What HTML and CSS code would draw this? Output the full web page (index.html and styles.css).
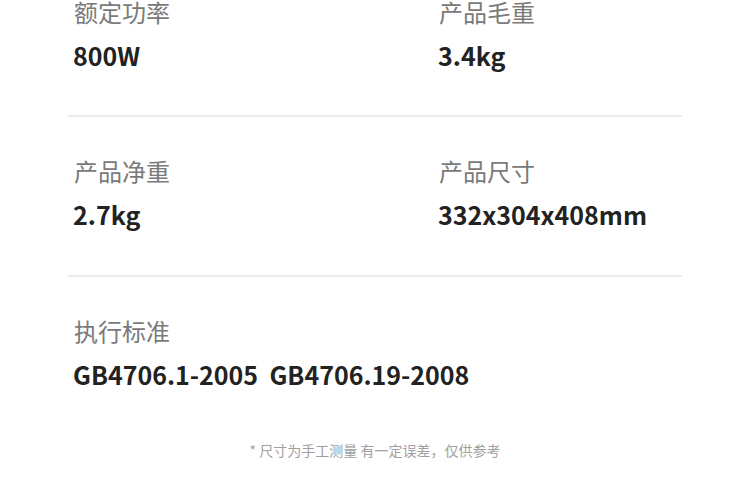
FILE: index.html
```html
<!DOCTYPE html>
<html lang="zh-CN">
<head>
<meta charset="utf-8">
<link rel="stylesheet" href="styles.css">
</head>
<body>
<div class="specs">
  <div class="row first">
    <div class="cell"><div class="label">额定功率</div><div class="value">800W</div></div>
    <div class="cell"><div class="label">产品毛重</div><div class="value">3.4kg</div></div>
  </div>
  <div class="row">
    <div class="cell"><div class="label">产品净重</div><div class="value">2.7kg</div></div>
    <div class="cell"><div class="label">产品尺寸</div><div class="value">332x304x408mm</div></div>
  </div>
  <div class="row last">
    <div class="cell wide"><div class="label">执行标准</div><div class="value">GB4706.1-2005&nbsp;&nbsp;GB4706.19-2008</div></div>
  </div>
  <p class="note">* 尺寸为手工测量 有一定误差，仅供参考</p>
</div>
</body>
</html>
```
FILE: styles.css
```css
html, body {
  margin: 0;
  padding: 0;
  background: #ffffff;
}
body {
  font-family: "Noto Sans CJK SC", "Noto Sans", sans-serif;
  width: 750px;
  height: 486px;
  overflow: hidden;
}
.specs {
  margin: -5px 68px 0 68px;
}
.row {
  display: grid;
  grid-template-columns: 365px 1fr;
  padding: 37px 0 43px 6px;
  border-bottom: 2px solid #ebebeb;
}
.row.first {
  padding-top: 0;
  padding-bottom: 42px;
}
.row.last {
  border-bottom: none;
  grid-template-columns: 1fr;
  padding-bottom: 0;
}
.label {
  font-size: 24px;
  line-height: 34px;
  color: #7a7a7a;
}
.value {
  margin-top: 8px;
  margin-left: -1px;
  font-size: 25px;
  line-height: 36px;
  font-weight: 700;
  color: #222222;
}
.note {
  margin: 48px 0 0 0;
  text-align: center;
  font-size: 14px;
  line-height: 20px;
  color: #a0a0a0;
}
```
